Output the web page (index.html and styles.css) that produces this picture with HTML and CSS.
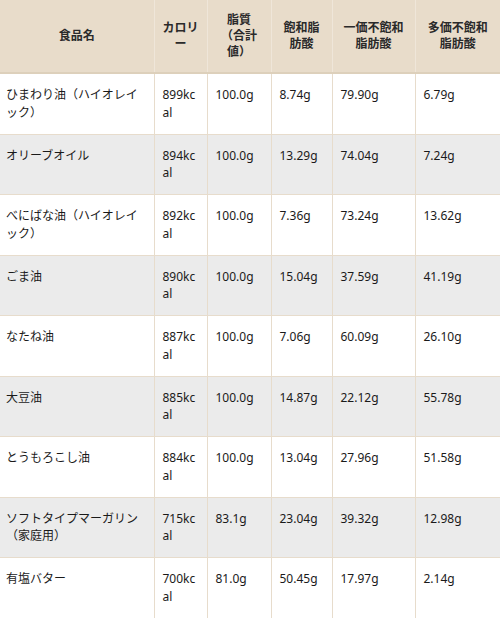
FILE: index.html
```html
<!DOCTYPE html>
<html lang="ja">
<head>
<meta charset="utf-8">
<link rel="stylesheet" href="styles.css">
</head>
<body>
<table class="oil-table">
  <colgroup>
    <col class="c-name">
    <col class="c-kcal">
    <col class="c-fat">
    <col class="c-sfa">
    <col class="c-mufa">
    <col class="c-pufa">
  </colgroup>
  <thead>
    <tr>
      <th>食品名</th>
      <th>カロリー</th>
      <th class="th-fat">脂質（合計値）</th>
      <th>飽和脂肪酸</th>
      <th>一価不飽和脂肪酸</th>
      <th>多価不飽和脂肪酸</th>
    </tr>
  </thead>
  <tbody>
    <tr><td>ひまわり油（ハイオレイック）</td><td>899kcal</td><td>100.0g</td><td>8.74g</td><td>79.90g</td><td>6.79g</td></tr>
    <tr><td>オリーブオイル</td><td>894kcal</td><td>100.0g</td><td>13.29g</td><td>74.04g</td><td>7.24g</td></tr>
    <tr><td>べにばな油（ハイオレイック）</td><td>892kcal</td><td>100.0g</td><td>7.36g</td><td>73.24g</td><td>13.62g</td></tr>
    <tr><td>ごま油</td><td>890kcal</td><td>100.0g</td><td>15.04g</td><td>37.59g</td><td>41.19g</td></tr>
    <tr><td>なたね油</td><td>887kcal</td><td>100.0g</td><td>7.06g</td><td>60.09g</td><td>26.10g</td></tr>
    <tr><td>大豆油</td><td>885kcal</td><td>100.0g</td><td>14.87g</td><td>22.12g</td><td>55.78g</td></tr>
    <tr><td>とうもろこし油</td><td>884kcal</td><td>100.0g</td><td>13.04g</td><td>27.96g</td><td>51.58g</td></tr>
    <tr><td>ソフトタイプマーガリン（家庭用）</td><td>715kcal</td><td>83.1g</td><td>23.04g</td><td>39.32g</td><td>12.98g</td></tr>
    <tr><td>有塩バター</td><td>700kcal</td><td>81.0g</td><td>50.45g</td><td>17.97g</td><td>2.14g</td></tr>
  </tbody>
</table>
</body>
</html>
```
FILE: styles.css
```css
html, body {
  margin: 0;
  padding: 0;
  background: #ffffff;
}

body {
  font-family: "Noto Sans", "Noto Sans CJK JP", sans-serif;
  font-size: 12px;
  color: #1a1a1a;
}

.oil-table {
  width: 500px;
  table-layout: fixed;
  border-collapse: collapse;
  line-break: loose;
}

.c-name { width: 154px; }
.c-kcal { width: 53px; }
.c-fat { width: 64px; }
.c-sfa { width: 61px; }
.c-mufa { width: 83px; }
.c-pufa { width: 85px; }

.oil-table th {
  background: #e8dcca;
  color: #2a2a2a;
  font-weight: bold;
  line-height: 16px;
  padding: 12px 7px;
  text-align: center;
  vertical-align: middle;
  border-left: 1px solid #efe6d9;
  border-bottom: 2px solid #ddd0bb;
}

.oil-table th.th-fat {
  padding-left: 9px;
  padding-right: 9px;
}

.oil-table td {
  line-height: 17.5px;
  padding: 12px 7px 12.5px 8px;
  text-align: left;
  vertical-align: top;
  overflow-wrap: anywhere;
  border-left: 1px solid #e7dccc;
  border-bottom: 1px solid #e7dccc;
}

.oil-table th:first-child,
.oil-table td:first-child {
  border-left: none;
}

.oil-table td:first-child {
  padding-left: 6px;
  padding-right: 8px;
}

.oil-table tbody tr:nth-child(even) td {
  background: #ebebeb;
}
```
